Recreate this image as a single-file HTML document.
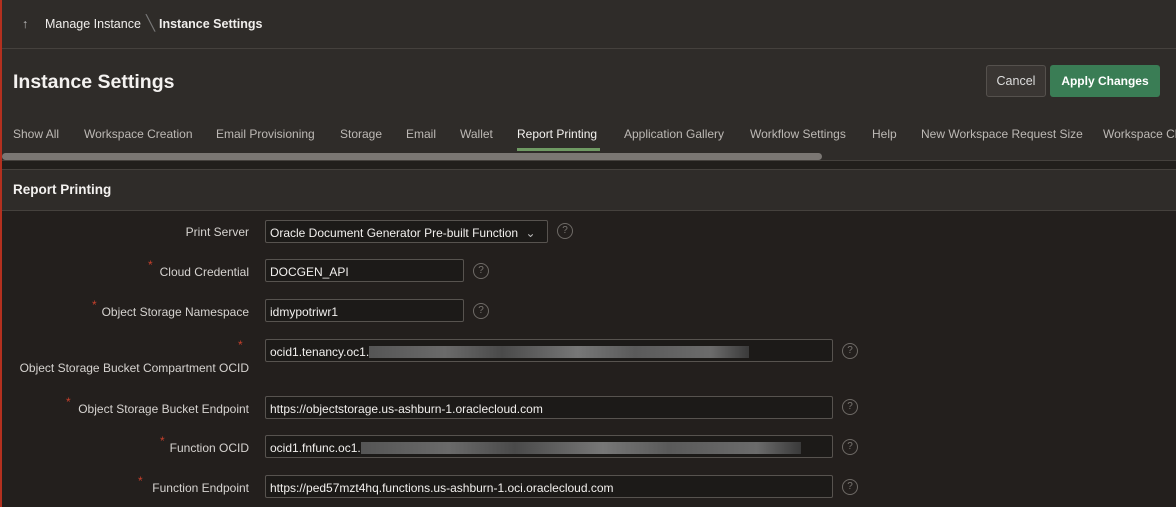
<!DOCTYPE html>
<html><head><meta charset="utf-8"><style>
*{box-sizing:border-box;margin:0;padding:0}
body{width:1176px;height:507px;overflow:hidden;background:#2f2c29;font-family:"Liberation Sans",sans-serif;color:#e8e6e3;position:relative}
.redl{position:absolute;left:0;top:0;width:2px;height:507px;background:#b3301f;z-index:5}
.a{position:absolute;white-space:nowrap}
.bc{top:17px;font-size:12.5px;color:#f0eeec}
.hr{position:absolute;left:0;width:1176px;height:1px;background:#45413d}
.tab{top:127px;font-size:12px;color:#bdb9b5}
.lbl{font-size:12px;color:#d6d3d0;text-align:right;right:927px}
.inp{position:absolute;left:265px;height:23px;background:#1c1a18;border:1px solid #57534f;border-radius:2px;font-size:12px;color:#f2f0ee;padding:5px 0 0 4px;white-space:nowrap}
.q{position:absolute;width:16px;height:16px;border:1px solid #6e6a66;border-radius:50%;font-size:10px;color:#7a7672;text-align:center;line-height:14px}
.st{position:absolute;color:#c7402c;font-size:12px}
.blur{display:inline-block;height:12px;vertical-align:-2px;background:linear-gradient(90deg,#555 0,#6a6a6a 20%,#4a4a4a 35%,#777 55%,#5a5a5a 70%,#6b6b6b 90%,#3a3a3a 100%)}
</style></head><body>
<div class="redl"></div>
<div class="a bc" style="left:22px;color:#bbb">↑</div>
<div class="a bc" style="left:45px">Manage Instance</div>
<div class="a bc" style="left:146px;color:#777;font-size:15px;top:14px">╲</div>
<div class="a bc" style="left:159px;font-weight:bold">Instance Settings</div>
<div class="hr" style="top:48px"></div>
<div class="a" style="left:13px;top:71px;font-size:19.5px;font-weight:bold;color:#f4f2f0">Instance Settings</div>
<div class="a" style="left:986px;top:65px;width:60px;height:32px;border:1px solid #55514d;background:#3a3633;border-radius:3px;font-size:12.5px;color:#ddd;text-align:center;line-height:30px">Cancel</div>
<div class="a" style="left:1050px;top:65px;width:110px;height:32px;background:#3a7d55;border-radius:3px;font-size:12px;font-weight:bold;color:#fff;text-align:center;line-height:32px">Apply Changes</div>
<div class="a tab" style="left:13px">Show All</div>
<div class="a tab" style="left:84px">Workspace Creation</div>
<div class="a tab" style="left:216px">Email Provisioning</div>
<div class="a tab" style="left:340px">Storage</div>
<div class="a tab" style="left:406px">Email</div>
<div class="a tab" style="left:460px">Wallet</div>
<div class="a tab" style="left:517px;color:#f4f2f0">Report Printing</div>
<div class="a" style="left:517px;top:148px;width:83px;height:3px;background:#6f9a63"></div>
<div class="a tab" style="left:624px">Application Gallery</div>
<div class="a tab" style="left:750px">Workflow Settings</div>
<div class="a tab" style="left:872px">Help</div>
<div class="a tab" style="left:921px">New Workspace Request Size</div>
<div class="a tab" style="left:1103px">Workspace Ch</div>
<div class="a" style="left:2px;top:153px;width:820px;height:7px;background:#7b7773;border-radius:4px"></div>
<div class="a" style="left:0;top:160px;width:1176px;height:10px;background:#221f1c;border-top:1px solid #45413d;border-bottom:1px solid #45413d"></div>
<div class="a" style="left:13px;top:182px;font-size:13.5px;font-weight:bold;color:#f4f2f0">Report Printing</div>
<div class="a" style="left:0;top:210px;width:1176px;height:297px;background:#231f1d;border-top:1px solid #45413d"></div>

<div class="a lbl" style="top:225px">Print Server</div>
<div class="inp" style="top:220px;width:283px">Oracle Document Generator Pre-built Function <span style="color:#bbb;margin-left:4px">⌄</span></div>
<div class="q" style="left:557px;top:223px">?</div>

<div class="st" style="left:148px;top:258px">*</div>
<div class="a lbl" style="top:265px">Cloud Credential</div>
<div class="inp" style="top:259px;width:199px">DOCGEN_API</div>
<div class="q" style="left:473px;top:263px">?</div>

<div class="st" style="left:92px;top:298px">*</div>
<div class="a lbl" style="top:305px">Object Storage Namespace</div>
<div class="inp" style="top:299px;width:199px">idmypotriwr1</div>
<div class="q" style="left:473px;top:303px">?</div>

<div class="st" style="left:238px;top:338px">*</div>
<div class="a lbl" style="top:361px">Object Storage Bucket Compartment OCID</div>
<div class="inp" style="top:339px;width:568px">ocid1.tenancy.oc1.<span class="blur" style="width:380px"></span></div>
<div class="q" style="left:842px;top:343px">?</div>

<div class="st" style="left:66px;top:395px">*</div>
<div class="a lbl" style="top:402px">Object Storage Bucket Endpoint</div>
<div class="inp" style="top:396px;width:568px">https://objectstorage.us-ashburn-1.oraclecloud.com</div>
<div class="q" style="left:842px;top:399px">?</div>

<div class="st" style="left:160px;top:434px">*</div>
<div class="a lbl" style="top:441px">Function OCID</div>
<div class="inp" style="top:435px;width:568px">ocid1.fnfunc.oc1.<span class="blur" style="width:440px"></span></div>
<div class="q" style="left:842px;top:439px">?</div>

<div class="st" style="left:138px;top:474px">*</div>
<div class="a lbl" style="top:481px">Function Endpoint</div>
<div class="inp" style="top:475px;width:568px">https://ped57mzt4hq.functions.us-ashburn-1.oci.oraclecloud.com</div>
<div class="q" style="left:842px;top:479px">?</div>
</body></html>
